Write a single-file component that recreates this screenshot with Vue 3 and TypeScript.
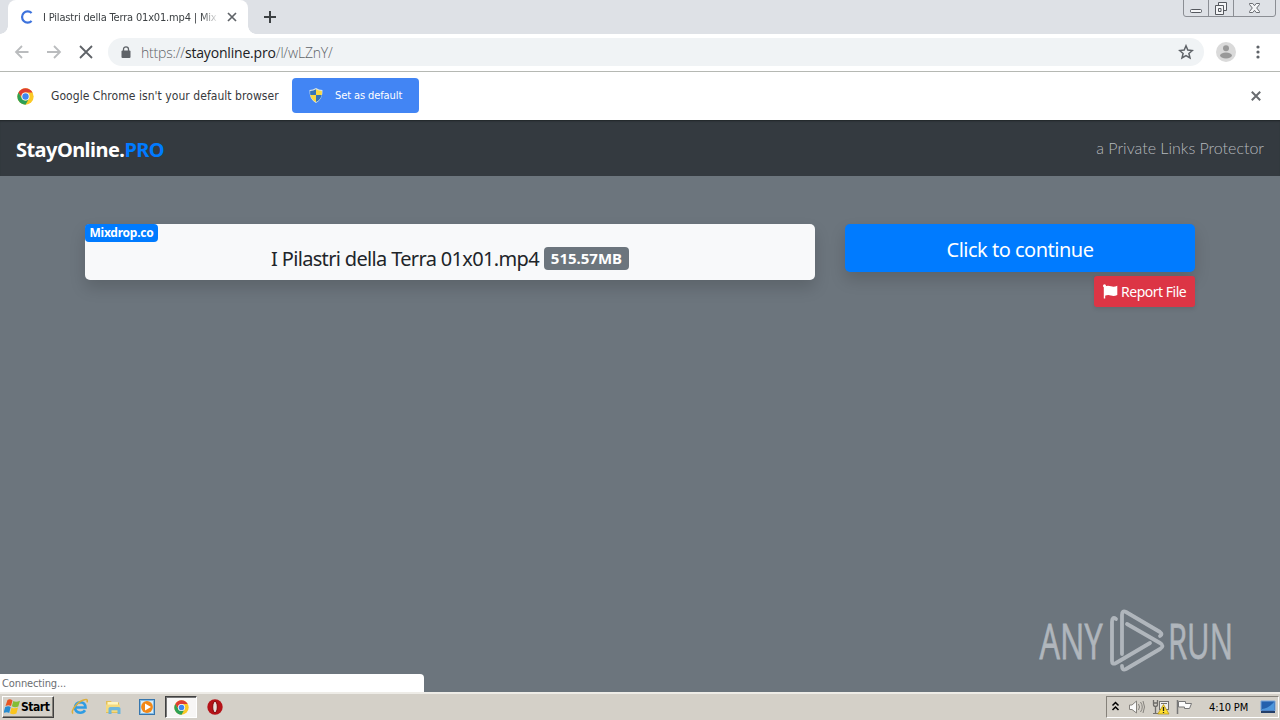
<script setup lang="ts">
const tabTitle = 'I Pilastri della Terra 01x01.mp4 | Mix'
const fileName = 'I Pilastri della Terra 01x01.mp4'
const fileSize = '515.57MB'
</script>

<template>
  <div class="screen">
    <header class="tabs">
      <div class="tab">
        <svg class="spinner" width="14" height="14" viewBox="0 0 14 14"><path d="M11.6 3A5.6 5.6 0 1 0 11.6 11" fill="none" stroke="#3c72dc" stroke-width="2.2" /></svg>
        <span class="tab-title">{{ tabTitle }}</span>
        <svg class="tab-close" width="10" height="10" viewBox="0 0 10 10"><path d="M1 1L9 9M9 1L1 9" stroke="#5f6368" stroke-width="1.7" /></svg>
      </div>
      <svg class="plus" width="12" height="12" viewBox="0 0 12 12"><path d="M6 0V12M0 6H12" stroke="#3c4043" stroke-width="2" /></svg>
      <svg class="window-buttons" width="94" height="18" viewBox="0 0 94 18">
        <path d="M.5 0V14Q.5 16.5 3 16.5H90Q92.500 16.500 92.500 14V0M25.500 0V16.500M50.500 0V16.500" fill="none" stroke="#8b8e94" />
        <rect x="7.500" y="9.500" width="11" height="3" rx="1" fill="#f4f5f7" stroke="#55585e" />
        <path d="M35.500 5V2.500H43.500V10.500H41M32.500 5.500H40.500V14.500H32.500ZM35.500 8.500H38V11.500H35.500Z" fill="#f4f5f7" stroke="#55585e" />
        <path d="M66.500 3.500H69.800L71.500 5.700L73.200 3.500H76.500V4.500L73.700 8L76.500 11.500V12.500H73.200L71.500 10.300L69.800 12.500H66.500V11.500L69.300 8L66.500 4.500Z" fill="#f4f5f7" stroke="#6a6d72" />
      </svg>
    </header>

    <div class="toolbar">
      <svg class="nav" width="80" height="16" viewBox="0 0 80 16" fill="none" stroke-width="1.8">
        <path d="M14.500 8H2M8 2L2 8L8 14" stroke="#babcbe" />
        <path d="M33 8H46M40 2L46 8L40 14" stroke="#babcbe" />
        <path d="M66 2L78 14M78 2L66 14" stroke="#5f6368" />
      </svg>
      <div class="omnibox">
        <svg class="lock" width="10" height="13" viewBox="0 0 10 13"><rect x=".5" y="4.500" width="9" height="7.500" rx="1" fill="#5f6368" /><path d="M2.500 5V3.300A2.500 2.500 0 0 1 7.500 3.300V5" fill="none" stroke="#5f6368" stroke-width="1.300" /></svg>
        <span class="url">https://<b>stayonline.pro</b>/l/wLZnY/</span>
        <svg class="star" width="16" height="16" viewBox="0 0 16 16"><path d="M8 1.800L9.800 6.100L14.400 6.500L10.900 9.500L12 14L8 11.600L4 14L5.100 9.500L1.600 6.500L6.200 6.100Z" fill="none" stroke="#5f6368" stroke-width="1.500" /></svg>
      </div>
      <svg class="avatar" width="20" height="20" viewBox="0 0 20 20"><circle cx="10" cy="10" r="10" fill="#dadada" /><circle cx="10" cy="6.300" r="3" fill="#999" /><ellipse cx="10" cy="13.500" rx="6" ry="2.900" fill="#999" /></svg>
      <svg class="menu" width="4" height="14" viewBox="0 0 4 14" fill="#5f6368"><circle cx="2" cy="2" r="1.600" /><circle cx="2" cy="7" r="1.600" /><circle cx="2" cy="12" r="1.600" /></svg>
    </div>

    <div class="infobar">
      <svg class="chrome-logo" width="17" height="17" viewBox="0 0 48 48">
        <circle cx="24" cy="24" r="23" fill="#fbc926" />
        <path d="M4.100 12.500A23 23 0 0 1 43.900 12.500H24A11.500 11.500 0 0 0 14 29.700Z" fill="#df3d32" />
        <path d="M4.100 12.500A23 23 0 0 0 24 47L34 29.700A11.500 11.500 0 0 1 14 29.700Z" fill="#2da055" />
        <circle cx="24" cy="24" r="11.500" fill="#fff" /><circle cx="24" cy="24" r="9" fill="#4086ef" />
      </svg>
      <span class="info-text">Google Chrome isn't your default browser</span>
      <div class="default-button">
        <svg width="14" height="15" viewBox="0 0 14 15">
          <path d="M7 0Q10 2 13.500 2Q14 11 7 15Q0 11 .5 2Q4 2 7 0Z" fill="#dbe6e5" />
          <path d="M7 1.200V7H1.300Q1 4.800 1.200 3Q4.500 3 7 1.200ZM7 7H12.700Q12 11.500 7 14Z" fill="#3574b8" />
          <path d="M7 1.200Q9.500 3 12.800 3Q13 5 12.700 7H7ZM7 7V14Q2 11.500 1.300 7Z" fill="#f7d743" />
        </svg>
        <span>Set as default</span>
      </div>
      <svg class="info-close" width="10" height="10" viewBox="0 0 10 10"><path d="M.8 .8L9.200 9.200M9.200 .8L.8 9.200" stroke="#686b6f" stroke-width="2" /></svg>
    </div>

    <nav class="navbar">
      <div class="brand">StayOnline.<span>PRO</span></div>
      <div class="tagline">a Private Links Protector</div>
    </nav>

    <main class="content">
      <section class="file-card">
        <span class="host">Mixdrop.co</span>
        <span class="file-name">{{ fileName }}</span><span class="size">{{ fileSize }}</span>
      </section>
      <aside class="actions">
        <div class="continue"><span>Click to continue</span></div>
        <div class="report">
          <svg width="15" height="15" viewBox="0 0 15 15"><circle cx="1.500" cy="1.800" r="1.500" fill="#fff" /><path d="M.8 1H2.200V14.500H.8ZM2 2.300Q5 1 8 2.300Q11 3.200 14.300 1.800V11Q11 12.500 8 11.500Q5 10.500 2 11.700Z" fill="#fff" /></svg>
          <span>Report File</span>
        </div>
      </aside>
      <svg class="watermark" width="204" height="78" viewBox="0 0 204 78">
        <g class="wm-text">
          <text x="4.500" y="54" textLength="63" lengthAdjust="spacingAndGlyphs">ANY</text>
          <text x="133" y="54" textLength="65" lengthAdjust="spacingAndGlyphs">RUN</text>
        </g>
        <g fill="none" stroke="#b0b6bc" stroke-width="3.800" stroke-linejoin="round" stroke-linecap="round">
          <path d="M81 14Q77 11 77 17V56Q77 60 81 58L115 38" />
          <path d="M87 49V10Q87 5 91 7L125 27Q128 29 125 31" />
          <path d="M92 19L125 38Q130 41 125 44L91 64Q87 66 87 61" />
        </g>
      </svg>
      <div class="status">Connecting...</div>
    </main>

    <footer class="taskbar">
      <div class="start">
        <svg width="16" height="16" viewBox="0 0 16 16">
          <path d="M3.500 1Q6 -.5 8.500 1.500L7 7Q4.500 5.500 1.500 7Z" fill="#e75522" /><path d="M9.300 2Q12 3.500 16 1.700L14.300 7.500Q11 9 7.900 7.300Z" fill="#83bd35" /><path d="M1.200 8Q4.500 6.700 6.700 8L5.200 14Q3 12.300 -.5 14Z" fill="#278cd1" /><path d="M7.600 8.400Q10 10 14 8.600L12.400 14.500Q9 16 6 14.300Z" fill="#fac51e" />
        </svg>
        <span>Start</span>
      </div>
      <div class="launch">
        <svg width="18" height="18" viewBox="0 0 18 18" fill="none"><path d="M4.800 9.500H14.500Q14.200 4.300 9.500 4.200Q4.500 4.400 4 9.500Q4 14.300 9.200 14.700Q12.500 14.600 14 12.200" stroke="#2e9ce3" stroke-width="2.600" /><path d="M2.200 15.500C-1.500 14 7 2.500 14.500 1.600Q17.200 1.200 15.900 4.400" stroke="#dcae3b" stroke-width="1.500" /></svg>
      </div>
      <div class="launch">
        <svg width="18" height="18" viewBox="0 0 18 18"><path d="M1 3H6L7 4.500H14V15H1Z" fill="#e3bf58" /><path d="M2.500 4H13V7H2.500Z" fill="#fff5bd" /><path d="M1 6.500H15V14H1Z" fill="#f4da7e" /><path d="M3.500 10.500Q3.500 9 5.500 9H13.500Q15.500 9 15.500 10.500V16H12.500V12.300H6.500V16H3.500Z" fill="#6db6dc" /></svg>
      </div>
      <div class="launch">
        <svg width="18" height="18" viewBox="0 0 18 18"><rect x="1.500" y="1.500" width="15" height="15" fill="#84bce6" stroke="#3776ad" /><rect x="3" y="3" width="12" height="12" fill="#d9edf8" /><circle cx="9" cy="9" r="5.900" fill="#f28817" /><path d="M7 5.500L13 9L7 12.500Z" fill="#fff" /></svg>
      </div>
      <div class="launch active">
        <svg width="15" height="15" viewBox="0 0 48 48">
          <circle cx="24" cy="24" r="23" fill="#fbc926" /><path d="M4.100 12.500A23 23 0 0 1 43.900 12.500H24A11.500 11.500 0 0 0 14 29.700Z" fill="#df3d32" /><path d="M4.100 12.500A23 23 0 0 0 24 47L34 29.700A11.500 11.500 0 0 1 14 29.700Z" fill="#2da055" /><circle cx="24" cy="24" r="11.500" fill="#fff" /><circle cx="24" cy="24" r="9" fill="#4086ef" />
        </svg>
      </div>
      <div class="launch">
        <svg width="18" height="18" viewBox="0 0 18 18"><circle cx="9" cy="9" r="7.700" fill="#b51218" /><ellipse cx="9" cy="9" rx="2.300" ry="5.700" fill="#e8e0dc" stroke="#7f0609" /></svg>
      </div>
      <div class="tray">
        <svg width="96" height="18" viewBox="0 0 96 18">
          <path d="M5.500 7.500L8.500 4.500L11.500 7.500M5.500 12L8.500 9L11.500 12" fill="none" stroke="#000" stroke-width="1.500" />
          <path d="M22.500 7H25L29.500 3V15L25 11.500H22.500Z" fill="#fafafa" stroke="#85827d" /><path d="M31.500 6Q33.500 9 31.500 12M33.500 4Q37 9 33.500 14M36 3Q39 9 36 15" fill="none" stroke="#85827d" />
          <path d="M46.500 2V6.500Q46.500 8.500 48.500 8.500V15M50.500 2V6.500Q50.500 8.500 48.500 8.500M46.500 5H50.500" fill="none" stroke="#6e6c69" stroke-width="1.300" /><rect x="52.500" y="3.500" width="9" height="8" fill="#eee" stroke="#73716e" /><path d="M46 15.500H51M54 5.500H60" stroke="#73716e" /><path d="M56.500 6.500L62 16H50.800Z" fill="#ffdf30" stroke="#ad8a0b" stroke-width=".7" /><path d="M56.500 9V13M56.500 14V15" stroke="#222" stroke-width="1.300" />
          <path d="M70.500 2V16" stroke="#777" stroke-width="1.500" /><path d="M71.500 3.500H78.500V5.500H84.500L82.500 10.500H77.500V9H71.500Z" fill="#fcfcfc" stroke="#777" />
        </svg>
        <span class="clock">4:10 PM</span>
        <svg class="desktop" width="16" height="14" viewBox="0 0 16 14"><path d="M1 1H15V11H1Z" fill="#2461ad" stroke="#78a7dc" /><path d="M2 9Q9 8 14 2V10H2Z" fill="#4d96db" /><path d="M1 11H15V13H1Z" fill="#233e68" /></svg>
      </div>
    </footer>
  </div>
</template>

<style>
html, body { margin: 0; overflow: hidden; }
</style>

<style scoped>
* { box-sizing: border-box; }
svg { display: block; flex: none; }
.screen { width: 1280px; height: 720px; display: flex; flex-direction: column; overflow: hidden; background: #6c757d; font-family: "DejaVu Sans Condensed", "DejaVu Sans", sans-serif; font-stretch: condensed; white-space: nowrap; }
.tabs { height: 34px; flex: none; background: #dee1e6; display: flex; align-items: flex-start; }
.tab { width: 240px; height: 34px; margin-left: 8px; padding-left: 12px; border-radius: 8px 8px 0 0; background: #fff; display: flex; align-items: center; position: relative; }
.tab::before, .tab::after { content: ""; position: absolute; bottom: 0; width: 8px; height: 8px; }
.tab::before { left: -8px; background: radial-gradient(circle at 0 0, #dee1e6 7.500px, #fff 8px); }
.tab::after { right: -8px; background: radial-gradient(circle at 100% 0, #dee1e6 7.500px, #fff 8px); }
.tab-title { width: 174px; margin-left: 9px; font-size: 11px; letter-spacing: -.17px; color: #3c4043; -webkit-mask-image: linear-gradient(90deg, #000 158px, transparent 176px); mask-image: linear-gradient(90deg, #000 158px, transparent 176px); }
.tab-close { margin-left: 10px; }
.plus { margin: 11px 0 0 16px; }
.window-buttons { margin-left: auto; margin-right: 3px; }
.toolbar { height: 37px; flex: none; background: #fff; display: flex; align-items: center; padding: 0 0 1px 14px; }
.omnibox { width: 1096px; height: 28px; margin-left: 14px; border-radius: 14px; background: #f0f3f5; display: flex; align-items: center; padding-left: 13px; }
.url { margin-left: 10px; font-family: "Open Sans", sans-serif; font-stretch: normal; font-size: 14px; font-weight: 300; letter-spacing: -.18px; color: #5f6368; }
.url b { font-weight: 400; color: #202124; }
.star { margin-left: auto; margin-right: 10px; }
.avatar { margin-left: 12px; }
.menu { margin-left: 20px; }
.infobar { height: 49px; flex: none; background: #fff; border-top: 1px solid #b5b8b3; display: flex; align-items: center; padding: 0 19px 0 17px; }
.info-text { margin-left: 17px; width: 228px; font-size: 12px; letter-spacing: .05px; color: #37393c; }
.default-button { width: 127px; height: 35px; margin: 0 0 2px 13px; border-radius: 4px; background: #4285f4; color: #fff; display: flex; align-items: center; padding-left: 17px; font-size: 11px; letter-spacing: -.1px; }
.default-button span { margin-left: 12px; }
.info-close { margin-left: auto; }
.navbar { height: 56px; flex: none; background: #343a40; box-shadow: inset 0 2px 2px -1px #202527; display: flex; justify-content: space-between; align-items: center; padding: 3px 16px 0; font-family: "Noto Sans", sans-serif; font-stretch: normal; }
.brand { font-size: 20px; font-weight: 700; letter-spacing: -.55px; color: #fff; }
.brand span { color: #007bff; }
.tagline { font-family: Lato, sans-serif; font-size: 16px; font-weight: 300; color: #b5b9bd; padding-bottom: 4px; }
.content { flex: 1; min-height: 0; position: relative; display: flex; align-items: flex-start; gap: 30px; padding: 48px 85px 0; font-family: "Noto Sans", sans-serif; font-stretch: normal; }
.file-card { width: 730px; height: 56px; position: relative; border-radius: 5px; background: #f8f9fa; box-shadow: 0 8px 16px rgba(0,0,0,.15); display: flex; justify-content: center; align-items: center; padding-top: 12px; color: #212529; }
.host { position: absolute; left: 0; top: 0; width: 73px; height: 18px; border-radius: 4px; background: #007bff; color: #fff; font-size: 12px; line-height: 18px; font-weight: 700; letter-spacing: -.25px; text-align: center; }
.file-name { font-size: 20px; letter-spacing: -.66px; }
.size { width: 85px; height: 23px; margin-left: 5px; border-radius: 4px; background: #6c757d; color: #fff; font-size: 15px; line-height: 23px; font-weight: 700; text-align: center; }
.actions { width: 350px; display: flex; flex-direction: column; align-items: flex-end; gap: 4px; }
.continue { width: 350px; height: 48px; border-radius: 5px; background: #007bff; color: #fff; display: flex; justify-content: center; align-items: center; padding-top: 3px; font-size: 20px; letter-spacing: -.5px; box-shadow: 0 8px 16px rgba(0,0,0,.15); }
.report { width: 101px; height: 31px; border-radius: 3px; background: #dc3545; color: #fff; display: flex; align-items: center; padding-left: 9px; font-size: 14px; letter-spacing: -.48px; box-shadow: 0 2px 4px rgba(0,0,0,.1); position: relative; }
.report span { margin-left: 3px; }
.watermark { position: absolute; left: 1035px; bottom: 9px; }
.wm-text { font-family: "Open Sans", sans-serif; font-size: 50px; font-weight: 400; fill: #b0b6bc; stroke: #b0b6bc; stroke-width: .8px; }
.status { position: absolute; left: 0; bottom: 0; width: 424px; height: 18px; border-radius: 0 4px 0 0; background: #fff; color: #6b6e72; padding-left: 2px; font-family: "DejaVu Sans Condensed", "DejaVu Sans", sans-serif; font-stretch: condensed; font-size: 11px; letter-spacing: -.12px; line-height: 19px; }
.taskbar { height: 28px; flex: none; background: #d4d0c8; box-shadow: inset 0 2px #eeece7; display: flex; align-items: center; padding: 2px 1px 0 2px; }
.start { width: 52px; height: 22px; margin-right: 10px; border: 1px solid; border-color: #fff #404040 #404040 #fff; box-shadow: inset -1px -1px #85817a; display: flex; align-items: center; gap: 1px; padding-left: 1px; font-size: 12px; font-weight: 700; letter-spacing: -.45px; color: #000; }
.launch { width: 32px; height: 22px; margin-right: 1.700px; display: flex; align-items: center; justify-content: center; }
.launch.active { background: #f7f6f5; border: 1px solid; border-color: #404040 #fff #fff #404040; box-shadow: inset 1px 1px #777; }
.tray { width: 173px; height: 22px; margin-left: auto; border: 1px solid; border-color: #85817a #fff #fff #85817a; display: flex; align-items: center; }
.clock { margin-left: 6px; width: 40px; font-size: 11px; color: #000; letter-spacing: -.1px; }
.desktop { margin-left: auto; margin-right: 2px; }
</style>
